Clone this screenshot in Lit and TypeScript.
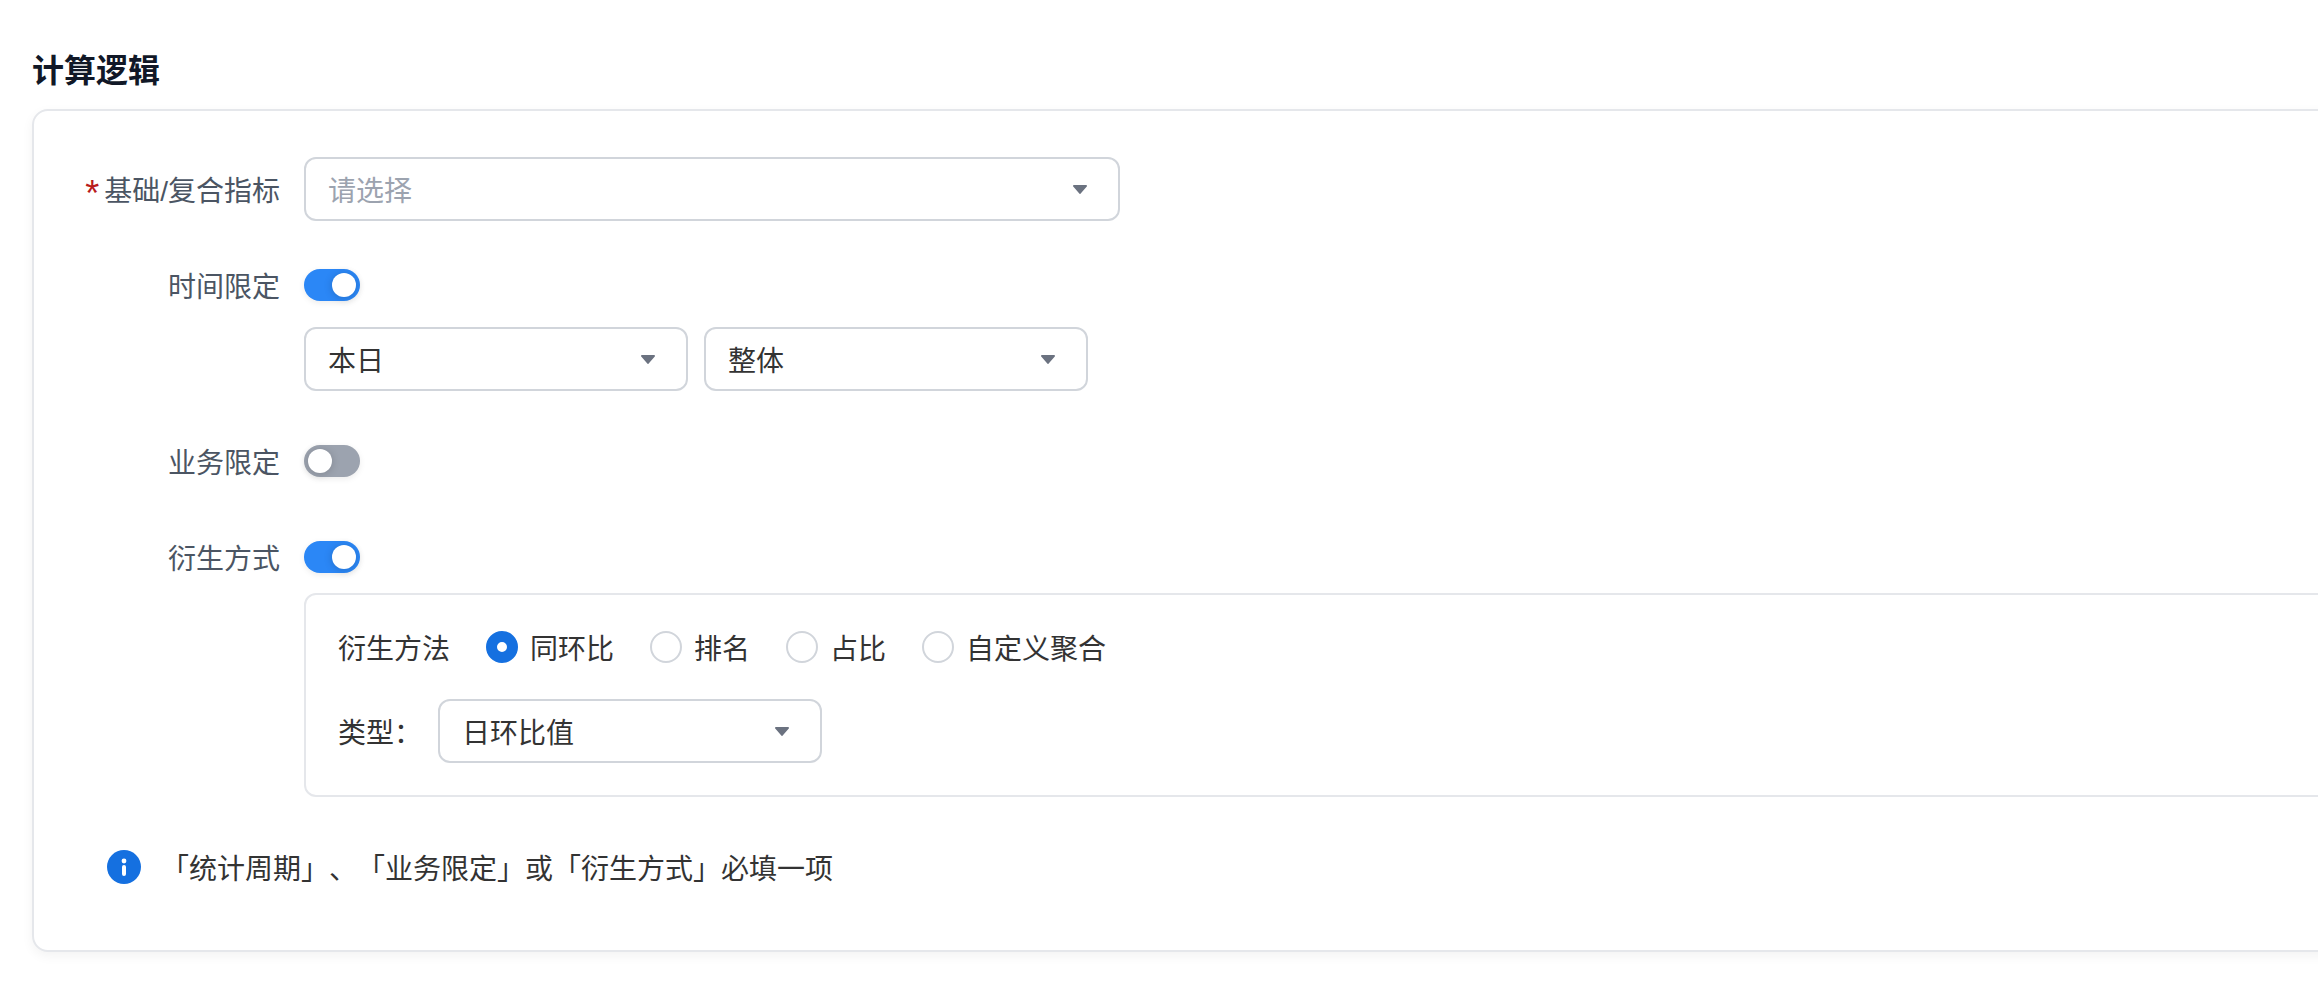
import { LitElement, html, css } from "lit";
import { customElement } from "lit/decorators.js";

@customElement("app-root")
export class AppRoot extends LitElement {
  static styles = css`
    :host { display: block; width: 2318px; height: 996px; overflow: hidden; background: #fff;
      font-family: "Noto Sans CJK SC", sans-serif; font-size: 28px; line-height: 40px; color: #333; box-sizing: border-box; padding: 48px 0 0 32px;
      text-spacing-trim: space-all; }
    * { box-sizing: border-box; }
    .title { font-size: 32px; line-height: 40px; font-weight: 700; color: #111827; margin: 0 0 21px; }
    .card { width: 2400px; height: 843px; border: 2px solid #e5e7eb; border-radius: 16px; background: #fff;
      box-shadow: 0 4px 12px rgba(0,0,0,.05); padding: 46px 46px 0; display: flex; flex-direction: column; }
    .row { display: flex; align-items: flex-start; gap: 24px; }
    .label { width: 200px; flex: none; text-align: right; color: #4b5563; line-height: 40px; white-space: nowrap; }
    .req .label { line-height: 64px; }
    .star { color: #b91c1c; margin-right: 5px; font-family: "Liberation Sans", sans-serif; font-size: 36px; line-height: 0; vertical-align: -5px; }
    .slash { font-family: "Liberation Sans", sans-serif; line-height: 0; }
    .select { height: 64px; width: 384px; flex: none; border: 2px solid #d1d5db; border-radius: 12px; background: #fff;
      padding: 0 31px 0 22px; display: flex; align-items: center; justify-content: space-between; }
    .select.wide { width: 816px; }
    .placeholder { color: #9ca3af; }
    .caret { width: 14px; height: 9px; flex: none; display: block; margin-top: 1px; }
    .toggle { width: 56px; height: 32px; border-radius: 16px; position: relative; background: #9ca3af; margin-top: 4px; flex: none;
      box-shadow: 0 2px 6px rgba(0,0,0,.08); }
    .toggle.on { background: #2b87f6; }
    .knob { position: absolute; top: 4px; left: 4px; width: 24px; height: 24px; border-radius: 50%; background: #fff;
      box-shadow: 0 1px 8px rgba(0,0,0,.18); }
    .toggle.on .knob { left: 28px; }
    .t1 { margin-top: 44px; }
    .selects { display: flex; gap: 16px; margin: 22px 0 0 224px; }
    .t2 { margin-top: 50px; }
    .t3 { margin-top: 56px; }
    .panel { margin: 16px 0 0 224px; height: 204px; border: 2px solid #e5e7eb; border-radius: 12px; padding: 32px 32px 0; display: flex; flex-direction: column; }
    .radios { display: flex; align-items: center; height: 40px; white-space: nowrap; }
    .m-label { width: 148px; flex: none; }
    .radio-item { display: flex; align-items: center; gap: 12px; margin-right: 36px; }
    .radio { width: 32px; height: 32px; border-radius: 50%; border: 2px solid #d1d5db; background: #fff; flex: none; }
    .radio.on { border: 11px solid #1570e0; }
    .type { display: flex; align-items: center; margin-top: 32px; }
    .type-label { width: 100px; flex: none; }
    .info { display: flex; align-items: center; gap: 20px; margin: 50px 0 0 27px; white-space: nowrap; }
    .info svg { width: 34px; height: 34px; flex: none; display: block; }
  `;

  private caret() {
    return html`<svg class="caret" viewBox="0 0 14 9"><path d="M.9 0h12.2c.8 0 1.2.9.7 1.5L7.7 8.6a.9.9 0 0 1-1.4 0L.2 1.5C-.3.9.1 0 .9 0z" fill="#6b7280"/></svg>`;
  }

  private select(text: string, placeholder = false, wide = false) {
    return html`<div class="select ${wide ? "wide" : ""}"><span class="${placeholder ? "placeholder" : ""}">${text}</span>${this.caret()}</div>`;
  }

  private toggle(on: boolean) {
    return html`<div class="toggle ${on ? "on" : ""}"><div class="knob"></div></div>`;
  }

  private radio(text: string, on = false) {
    return html`<div class="radio-item"><div class="radio ${on ? "on" : ""}"></div><span>${text}</span></div>`;
  }

  render() {
    return html`
      <div class="title">计算逻辑</div>
      <div class="card">
        <div class="row req">
          <div class="label"><span class="star">*</span>基础<span class="slash">/</span>复合指标</div>
          ${this.select("请选择", true, true)}
        </div>
        <div class="row t1"><div class="label">时间限定</div>${this.toggle(true)}</div>
        <div class="selects">${this.select("本日")}${this.select("整体")}</div>
        <div class="row t2"><div class="label">业务限定</div>${this.toggle(false)}</div>
        <div class="row t3"><div class="label">衍生方式</div>${this.toggle(true)}</div>
        <div class="panel">
          <div class="radios">
            <div class="m-label">衍生方法</div>
            ${this.radio("同环比", true)}${this.radio("排名")}${this.radio("占比")}${this.radio("自定义聚合")}
          </div>
          <div class="type"><div class="type-label">类型：</div>${this.select("日环比值")}</div>
        </div>
        <div class="info">
          <svg viewBox="0 0 34 34"><circle cx="17" cy="17" r="17" fill="#1570e0"/><circle cx="17" cy="11" r="2.4" fill="#fff"/><rect x="15" y="15" width="4" height="11" rx="2" fill="#fff"/></svg>
          <span>「统计周期」、「业务限定」或「衍生方式」必填一项</span>
        </div>
      </div>
    `;
  }
}
